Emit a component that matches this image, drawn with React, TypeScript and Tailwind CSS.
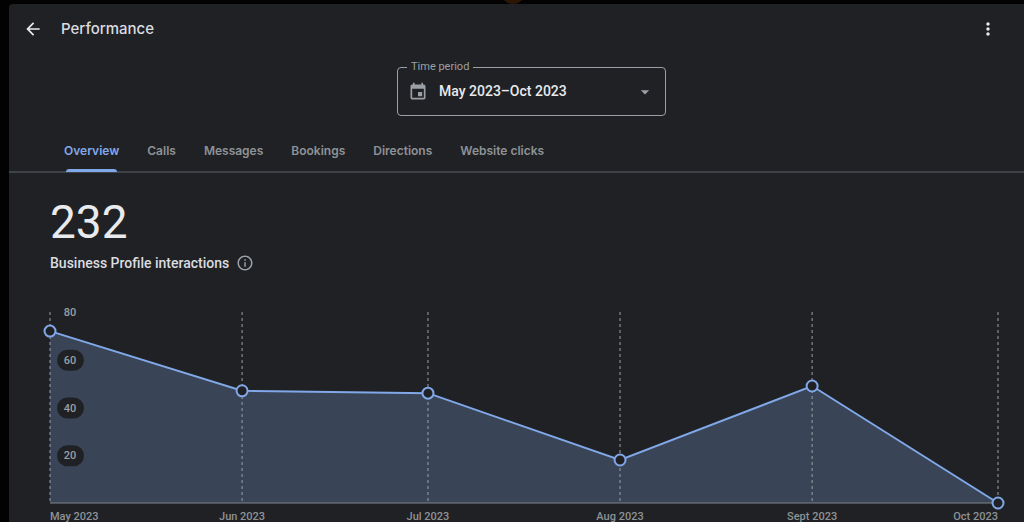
import { useState } from "react";
import { MdArrowBack, MdArrowDropDown, MdEvent, MdInfoOutline, MdMoreVert } from "react-icons/md";

const TABS = ["Overview", "Calls", "Messages", "Bookings", "Directions", "Website clicks"];

// day = days since the start of the period, so months keep their real width
const MONTHS = [
  { label: "May 2023", day: 0, value: 72 },
  { label: "Jun 2023", day: 31, value: 47 },
  { label: "Jul 2023", day: 61, value: 46 },
  { label: "Aug 2023", day: 92, value: 18 },
  { label: "Sept 2023", day: 123, value: 49 },
  { label: "Oct 2023", day: 153, value: 0 },
];

const DAYS = 153;
const MAX = 80;
const PLOT_HEIGHT = 191;

function yOf(value: number) {
  return PLOT_HEIGHT - (value / MAX) * PLOT_HEIGHT;
}

function xOf(day: number) {
  return `${(day / DAYS) * 100}%`;
}

function InteractionsChart() {
  const line = MONTHS.map((m) => `${m.day},${yOf(m.value)}`).join(" ");

  return (
    <svg className="block h-[210px] w-full overflow-visible font-['Roboto',sans-serif] font-medium" role="img" aria-label="Business Profile interactions by month">
      <svg width="100%" height={PLOT_HEIGHT} viewBox={`0 0 ${DAYS} ${PLOT_HEIGHT}`} preserveAspectRatio="none" className="overflow-visible">
        <polygon points={`0,${PLOT_HEIGHT} ${line} ${DAYS},${PLOT_HEIGHT}`} className="fill-[#394457]" />
      </svg>
      {MONTHS.map((m) => (
        <line key={m.label} x1={xOf(m.day)} x2={xOf(m.day)} y1="0" y2={PLOT_HEIGHT} strokeDasharray="3 3" className="stroke-[#9aa0a6]" />
      ))}
      <line x1="0" x2="100%" y1={PLOT_HEIGHT} y2={PLOT_HEIGHT} className="stroke-[#80868b]" />
      <svg width="100%" height={PLOT_HEIGHT} viewBox={`0 0 ${DAYS} ${PLOT_HEIGHT}`} preserveAspectRatio="none" className="overflow-visible">
        <polyline points={line} fill="none" strokeWidth="2" vectorEffect="non-scaling-stroke" className="stroke-[#81a8e8]" />
      </svg>
      {MONTHS.map((m) => (
        <circle key={m.label} cx={xOf(m.day)} cy={yOf(m.value)} r="5.5" strokeWidth="2" className="fill-[#202124] stroke-[#81a8e8]" />
      ))}
      {[80, 60, 40, 20].map((tick) => (
        <g key={tick}>
          {tick < MAX && <rect x="7" y={yOf(tick) - 10} width="27" height="21" rx="10.5" className="fill-[#202124]" />}
          <text x="20" y={yOf(tick) + 4} textAnchor="middle" className="fill-[#9aa0a6] text-[11px]">
            {tick}
          </text>
        </g>
      ))}
      {MONTHS.map((m, i) => (
        <text
          key={m.label}
          x={xOf(m.day)}
          y="208"
          textAnchor={i === 0 ? "start" : i === MONTHS.length - 1 ? "end" : "middle"}
          className="fill-[#8e9297] text-[11px]"
        >
          {m.label}
        </text>
      ))}
    </svg>
  );
}

export default function App() {
  const [tab, setTab] = useState("Overview");

  return (
    <div className="relative min-h-screen overflow-hidden bg-[#020203] pl-[9px] pt-1 font-['Roboto',sans-serif]">
      {/* dimmed page behind the panel */}
      <div aria-hidden="true" className="absolute -top-5 left-[501px] size-6 rounded-full bg-[#2b1503]" />
      <main className="relative min-h-[calc(100vh-4px)] rounded-tl bg-[#202124] text-[#e8eaed]">
        <header className="flex h-[50px] items-center pl-[14px] pr-[26px]">
          <button type="button" aria-label="Back">
            <MdArrowBack className="size-5" />
          </button>
          <h1 className="ml-[18px] font-['Inter',sans-serif] text-[15px] font-medium text-[#dadce0]">Performance</h1>
          <button type="button" aria-label="More options" className="ml-auto">
            <MdMoreVert className="size-5" />
          </button>
        </header>

        <div className="flex justify-center pl-[30px] pt-[13px]">
          <div className="relative flex h-[49px] w-[269px] items-center">
            <label htmlFor="period" className="absolute -top-2 left-[10px] bg-[#202124] px-1 text-[11px] leading-4 text-[#9aa0a6]">
              Time period
            </label>
            <MdEvent className="pointer-events-none absolute left-[11px] size-5 text-[#9aa0a6]" />
            <select
              id="period"
              className="h-full w-full appearance-none rounded border border-[#9aa0a6] bg-transparent pb-0.5 pl-[41px] pr-9 text-sm font-medium text-[#e8eaed]"
            >
              <option>May 2023–Oct 2023</option>
            </select>
            <MdArrowDropDown className="pointer-events-none absolute right-[11px] size-5 text-[#9aa0a6]" />
          </div>
        </div>

        <nav role="tablist" className="mt-3 flex h-[45px] border-b-2 border-[#3f4246] pl-[41px] font-['Inter',sans-serif] text-xs font-semibold">
          {TABS.map((name) => (
            <button
              key={name}
              type="button"
              role="tab"
              aria-selected={tab === name}
              onClick={() => setTab(name)}
              className={`relative px-[14px] pt-0.5 ${tab === name ? "text-[#81a8e8]" : "text-[#8e9297]"}`}
            >
              {name}
              {tab === name && <span className="absolute inset-x-4 -bottom-px h-[3px] rounded-t bg-[#81a8e8]" />}
            </button>
          ))}
        </nav>

        <section className="pl-[41px] pr-[26px] pt-6">
          <p className="text-[46px] leading-[50px]">232</p>
          <h2 className="mt-1 flex h-6 items-center gap-[7px] text-sm font-medium text-[#dadce0]">
            Business Profile interactions
            <MdInfoOutline className="size-[18px] text-[#9aa0a6]" />
          </h2>
          <div className="pt-[37px]">
            <InteractionsChart />
          </div>
        </section>
      </main>
    </div>
  );
}
